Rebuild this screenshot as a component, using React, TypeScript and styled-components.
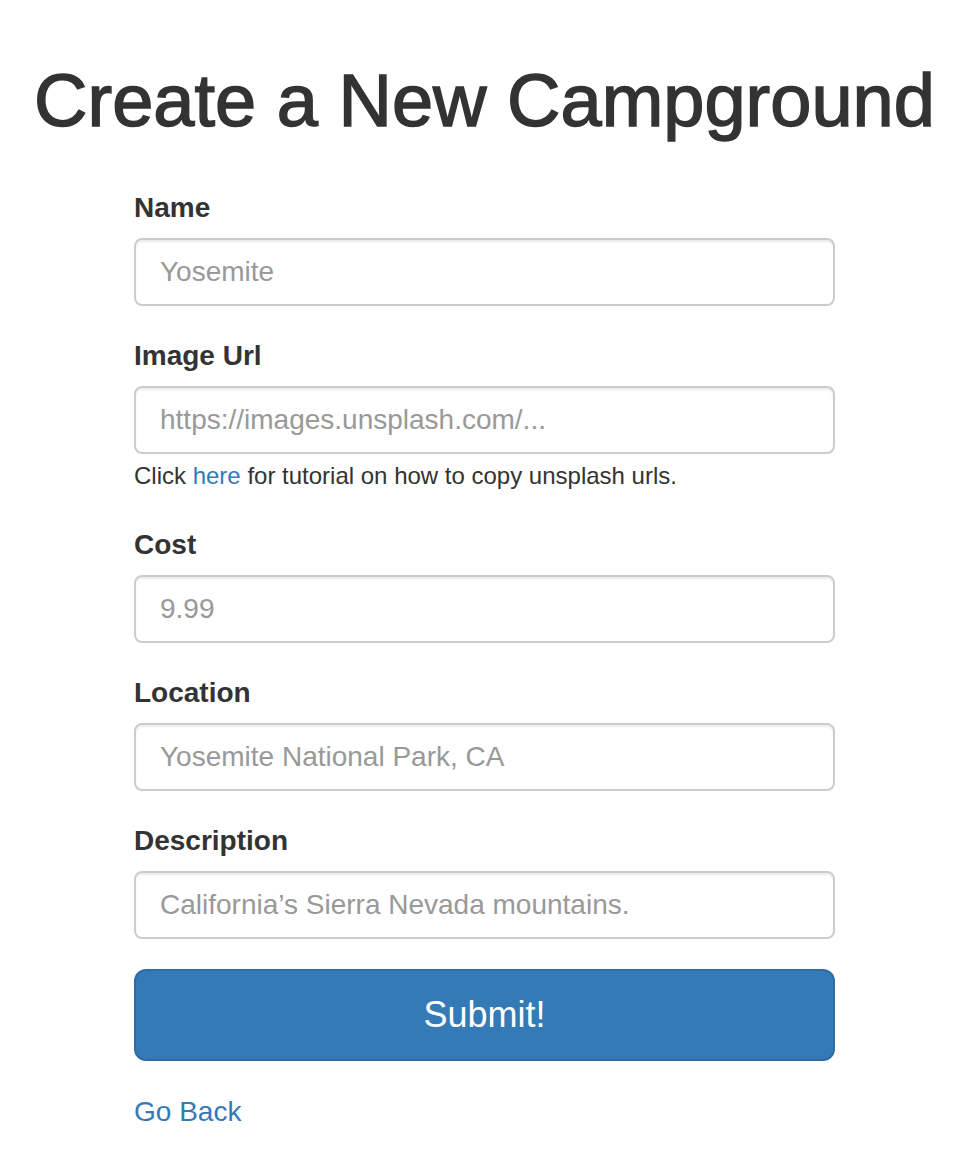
import React from "react";
import styled, { createGlobalStyle } from "styled-components";

const GlobalStyle = createGlobalStyle`
  html, body {
    margin: 0;
    padding: 0;
    background: #fff;
  }
  body {
    font-family: "Liberation Sans", Helvetica, Arial, sans-serif;
    color: #333;
  }
  * { box-sizing: border-box; }
`;

const Page = styled.div`
  display: flex;
  flex-direction: column;
  align-items: center;
  padding: 60px 0 30px 9px;
`;

const Title = styled.h1`
  margin: 0 0 47px;
  font-size: 74px;
  line-height: 1.1;
  font-weight: 500;
  color: #333;
  white-space: nowrap;
  -webkit-text-stroke: 1.5px #333;
`;

const Form = styled.form`
  width: 701px;
  display: flex;
  flex-direction: column;
`;

const Group = styled.div`
  display: flex;
  flex-direction: column;
  margin-bottom: 30px;
`;

const Label = styled.label`
  font-size: 28px;
  line-height: 40px;
  font-weight: 700;
  margin-bottom: 10px;
`;

const Input = styled.input`
  height: 68px;
  width: 100%;
  padding: 12px 24px;
  font-family: inherit;
  font-size: 28px;
  color: #555;
  background: #fff;
  border: 2px solid #ccc;
  border-radius: 8px;
  box-shadow: inset 0 2px 2px rgba(0, 0, 0, 0.075);
  outline: none;
  &::placeholder {
    color: #999;
    opacity: 1;
  }
`;

const Help = styled.p`
  margin: 5px 0 2px;
  font-size: 24px;
  line-height: 34px;
  color: #333;
`;

const Link = styled.a`
  color: #337ab7;
  text-decoration: none;
`;

const SubmitButton = styled.button`
  width: 100%;
  height: 92px;
  padding: 20px 32px;
  font-family: inherit;
  font-size: 36px;
  line-height: 48px;
  color: #fff;
  background: #337ab7;
  border: 2px solid #2e6da4;
  border-radius: 12px;
  cursor: pointer;
`;

const BackLink = styled(Link)`
  display: block;
  font-size: 28px;
  line-height: 40px;
  margin-top: 31px;
`;

const fields = [
  { label: "Name", placeholder: "Yosemite" },
  {
    label: "Image Url",
    placeholder: "https://images.unsplash.com/...",
    help: true,
  },
  { label: "Cost", placeholder: "9.99" },
  { label: "Location", placeholder: "Yosemite National Park, CA" },
  { label: "Description", placeholder: "California’s Sierra Nevada mountains." },
];

export default function App() {
  return (
    <>
      <GlobalStyle />
      <Page>
        <Title>Create a New Campground</Title>
        <Form onSubmit={(e) => e.preventDefault()}>
          {fields.map((f) => (
            <Group key={f.label}>
              <Label>{f.label}</Label>
              <Input type="text" placeholder={f.placeholder} />
              {f.help && (
                <Help>
                  Click <Link href="#">here</Link> for tutorial on how to copy
                  unsplash urls.
                </Help>
              )}
            </Group>
          ))}
          <SubmitButton type="submit">Submit!</SubmitButton>
          <BackLink href="#">Go Back</BackLink>
        </Form>
      </Page>
    </>
  );
}
